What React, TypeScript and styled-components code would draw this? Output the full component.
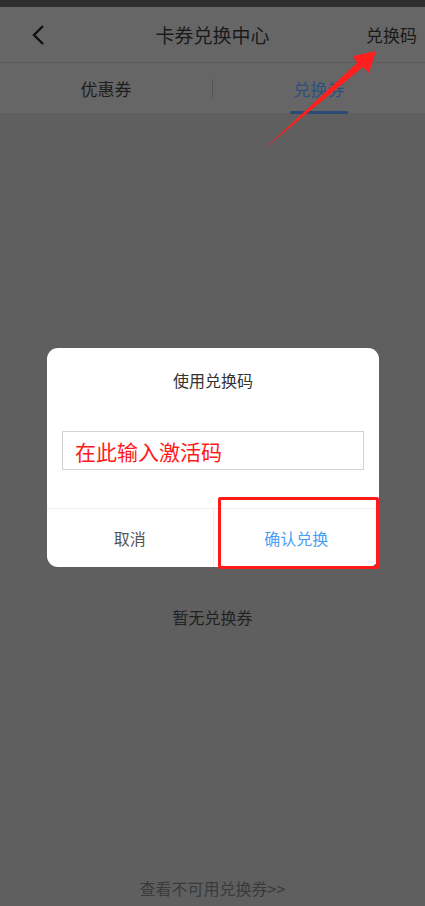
import styled, { createGlobalStyle } from "styled-components";

const GlobalStyle = createGlobalStyle`
  html, body {
    margin: 0;
    padding: 0;
    background: #5f5f5f;
  }
  body {
    font-family: "Noto Sans CJK SC", "Noto Sans", sans-serif;
  }
`;

export default function App() {
  return (
    <>
      <GlobalStyle />
      <Page>
        <StatusBar />
        <Header>
          <BackBtn>
            <svg width="14" height="22" viewBox="0 0 14 22">
              <path d="M12 2 L3 11 L12 20" fill="none" stroke="#111" strokeWidth="2.4" />
            </svg>
          </BackBtn>
          <Title>卡券兑换中心</Title>
          <HeaderAction>兑换码</HeaderAction>
        </Header>
        <Tabs>
          <Tab>优惠券</Tab>
          <TabDivider />
          <Tab active>兑换券</Tab>
        </Tabs>
        <Content>
          <EmptyText>暂无兑换券</EmptyText>
          <FooterLink>查看不可用兑换券&gt;&gt;</FooterLink>
        </Content>

        <Modal>
          <ModalTitle>使用兑换码</ModalTitle>
          <CodeInput>在此输入激活码</CodeInput>
          <ModalActions>
            <ActionBtn>取消</ActionBtn>
            <ActionBtn primary>确认兑换</ActionBtn>
          </ModalActions>
          <Highlight />
        </Modal>

        {/* red annotation arrow */}
        <Arrow width="425" height="160" viewBox="0 0 425 160">
          <polygon
            points="264,149 357,63 353,56 376,51 369,73 363,67"
            fill="#ff1f1f"
          />
        </Arrow>
      </Page>
    </>
  );
}

const Page = styled.div`
  position: relative;
  width: 425px;
  height: 906px;
  display: flex;
  flex-direction: column;
  background: #5f5f5f;
  overflow: hidden;
`;

const StatusBar = styled.div`
  height: 7px;
  background: #2e2e2e;
`;

const Header = styled.div`
  height: 55px;
  display: grid;
  grid-template-columns: 1fr auto 1fr;
  align-items: center;
  padding: 0 8px;
  background: #666;
  border-bottom: 1px solid #5a5a5a;
`;

const BackBtn = styled.div`
  display: flex;
  align-items: center;
  padding-left: 23px;
`;

const Title = styled.div`
  font-size: 19px;
  color: #1a1a1a;
`;

const HeaderAction = styled.div`
  justify-self: end;
  font-size: 17px;
  color: #1a1a1a;
`;

const Tabs = styled.div`
  height: 50px;
  display: flex;
  align-items: center;
  background: #666;
`;

const Tab = styled.div<{ active?: boolean }>`
  flex: 1;
  height: 100%;
  display: flex;
  align-items: center;
  justify-content: center;
  position: relative;
  font-size: 17px;
  color: ${(p) => (p.active ? "#30507e" : "#1e1e1e")};

  &::after {
    content: "";
    display: ${(p) => (p.active ? "block" : "none")};
    position: absolute;
    bottom: -1px;
    left: 50%;
    margin-left: -29px;
    width: 58px;
    height: 3px;
    border-radius: 2px;
    background: #2c4a76;
  }
`;

const TabDivider = styled.div`
  width: 1px;
  height: 19px;
  background: #555;
`;

const Content = styled.div`
  flex: 1;
  display: flex;
  flex-direction: column;
  align-items: center;
  padding: 492px 0 6px;
  background: #5f5f5f;
`;

const EmptyText = styled.div`
  font-size: 16px;
  color: #222;
`;

const FooterLink = styled.div`
  margin-top: auto;
  font-size: 16px;
  color: #3a3a3a;
`;

const Modal = styled.div`
  position: absolute;
  left: 47px;
  top: 348px;
  width: 332px;
  height: 219px;
  background: #fff;
  border-radius: 11px;
  display: flex;
  flex-direction: column;
`;

const ModalTitle = styled.div`
  padding-top: 20px;
  height: 24px;
  line-height: 24px;
  text-align: center;
  font-size: 16px;
  color: #333;
`;

const CodeInput = styled.div`
  margin: 39px 15px 0;
  height: 37px;
  border: 1px solid #d2d2d2;
  display: flex;
  align-items: center;
  padding-left: 12px;
  font-size: 21px;
  color: #ff1a1a;
`;

const ModalActions = styled.div`
  margin-top: auto;
  height: 58px;
  display: flex;
  border-top: 1px solid #eee;
`;

const ActionBtn = styled.div<{ primary?: boolean }>`
  flex: 1;
  display: flex;
  align-items: center;
  justify-content: center;
  font-size: 16px;
  color: ${(p) => (p.primary ? "#4a9ef5" : "#555")};

  & + & {
    border-left: 1px solid #eee;
  }
`;

const Highlight = styled.div`
  position: absolute;
  left: 171px;
  top: 149px;
  width: 155px;
  height: 66px;
  border: 3px solid #ff1a1a;
  border-radius: 2px;
`;

const Arrow = styled.svg`
  position: absolute;
  left: 0;
  top: 0;
  pointer-events: none;
`;
